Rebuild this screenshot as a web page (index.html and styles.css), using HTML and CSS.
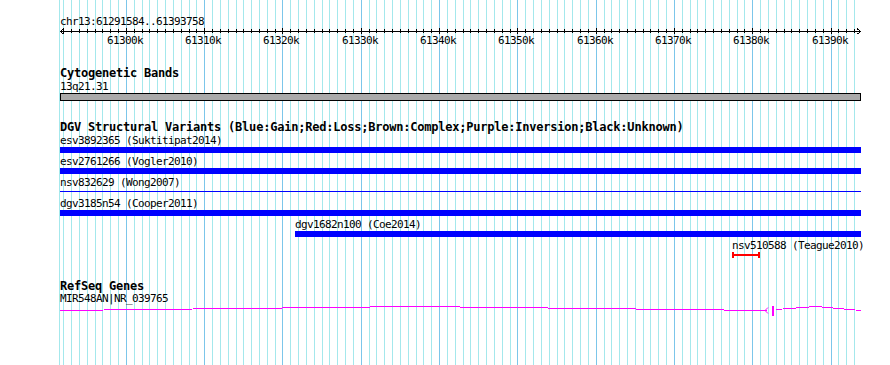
FILE: index.html
```html
<!DOCTYPE html>
<html lang="en">
  <head>
    <meta charset="UTF-8" />
    <meta name="viewport" content="width=device-width, initial-scale=1.0" />
    <title>chr13:61291584..61393758</title>
    <link rel="stylesheet" href="styles.css">
  </head>
  <body>
    <div class="panel" id="panel" data-start="61291584" data-end="61393758">
      <svg class="grid" id="grid" width="890" height="365"></svg>

      <div class="ruler">
        <div class="ruler-label">chr13:61291584..61393758</div>
        <svg class="axis" id="axis" width="890" height="6"></svg>
        <div class="ticks" id="ticks"></div>
      </div>

      <div class="track track-first">
        <div class="track-title">Cytogenetic Bands</div>
        <div class="feature" data-start="61200000" data-end="61500000">
          <div class="label">13q21.31</div>
          <div class="glyph band"></div>
        </div>
      </div>

      <div class="track">
        <div class="track-title">DGV Structural Variants (Blue:Gain;Red:Loss;Brown:Complex;Purple:Inversion;Black:Unknown)</div>
        <div class="feature" data-start="61100000" data-end="61600000">
          <div class="label">esv3892365 (Suktitipat2014)</div>
          <div class="glyph gain"></div>
        </div>
        <div class="feature" data-start="61150000" data-end="61550000">
          <div class="label">esv2761266 (Vogler2010)</div>
          <div class="glyph gain"></div>
        </div>
        <div class="feature" data-start="61200000" data-end="61450000">
          <div class="label">nsv832629 (Wong2007)</div>
          <div class="glyph gain-thin"></div>
        </div>
        <div class="feature" data-start="61250000" data-end="61420000">
          <div class="label">dgv3185n54 (Cooper2011)</div>
          <div class="glyph gain"></div>
        </div>
        <div class="feature" data-start="61321598" data-end="61420000">
          <div class="label">dgv1682n100 (Coe2014)</div>
          <div class="glyph gain"></div>
        </div>
        <div class="feature" data-start="61377411" data-end="61380987">
          <div class="label">nsv510588 (Teague2010)</div>
          <div class="glyph loss"></div>
        </div>
      </div>

      <div class="track">
        <div class="track-title title-tight">RefSeq Genes</div>
        <div class="feature" data-start="61000000" data-end="61500000">
          <div class="label">MIR548AN|NR_039765</div>
          <svg class="gene" width="801" height="12" viewBox="60 304 801 12">
            <polyline points="60,309.5 415,305.5 767,309.5" />
            <polyline points="776,308.5 816,305.5 861,309.5" />
            <polyline class="strand" points="768,306.5 765,309.5 768,312.5" />
            <rect x="772" y="305" width="2" height="10" />
          </svg>
        </div>
      </div>
    </div>

    <script src="script.js"></script>
  </body>
</html>
```

FILE: styles.css
```css
* {
  box-sizing: border-box;
}
body {
  margin: 0;
  background: #ffffff;
  color: #000000;
  font-family: "DejaVu Sans Mono", "Liberation Mono", monospace;
  font-size: 11px;
  letter-spacing: -0.62px;
  line-height: 13px;
}

.panel {
  position: relative;
  z-index: 0;
  width: 890px;
  height: 365px;
  padding-left: 60px;
  overflow: hidden;
}

/* grid lines sit behind everything else */
.grid {
  position: absolute;
  left: 0;
  top: 0;
  z-index: -1;
}
.grid line {
  stroke: #a4e8ec;
  stroke-width: 1;
  shape-rendering: crispEdges;
}
.grid line.major {
  stroke: #7cc6ea;
}

.ruler {
  padding-top: 15px;
  height: 47px;
}
.axis {
  display: block;
  margin-left: -60px;
}
.axis line,
.axis polyline {
  stroke: #000000;
  stroke-width: 1;
  fill: none;
  shape-rendering: crispEdges;
}
.ticks {
  position: relative;
  height: 13px;
}
.tick-label {
  position: absolute;
  top: 0;
  white-space: nowrap;
}

.track {
  margin-top: 20px;
}
.track-title {
  font-weight: bold;
  font-size: 12px;
  letter-spacing: -0.22px;
  white-space: nowrap;
}
.title-tight {
  line-height: 12px;
}

.feature {
  white-space: nowrap;
  padding-bottom: 2px;
}
.track-first .feature {
  padding-bottom: 0;
}

.glyph {
  height: 6px;
}
.band {
  height: 8px;
  background: #aaaaaa;
  border: 1px solid #000000;
}
.gain {
  background: #0000ff;
}
.gain-thin {
  position: relative;
}
.gain-thin::before {
  content: "";
  position: absolute;
  left: 0;
  right: 0;
  top: 2px;
  height: 1px;
  background: #0000ff;
}
.loss {
  position: relative;
  border-left: 2px solid #ff0000;
  border-right: 2px solid #ff0000;
}
.loss::before {
  content: "";
  position: absolute;
  left: 0;
  right: 0;
  top: 2px;
  height: 2px;
  background: #ff0000;
}

.gene {
  display: block;
  overflow: visible;
}
.gene polyline {
  fill: none;
  stroke: #ff00ff;
  stroke-width: 1;
  shape-rendering: crispEdges;
}
.gene polyline.strand {
  shape-rendering: auto;
}
.gene rect {
  fill: #ff00ff;
}
```

FILE: script.js
```js
const panel = document.getElementById("panel");
const viewStart = Number(panel.dataset.start);
const viewEnd = Number(panel.dataset.end);
const trackLeft = 60;
const trackWidth = 801;
const scale = 800 / (viewEnd - viewStart + 1); // pixels per base

const SVG_NS = "http://www.w3.org/2000/svg";

function toPx(pos) {
  return Math.round((pos - viewStart) * scale);
}

function addLine(svg, x1, y1, x2, y2, cls) {
  const line = document.createElementNS(SVG_NS, "line");
  line.setAttribute("x1", x1);
  line.setAttribute("y1", y1);
  line.setAttribute("x2", x2);
  line.setAttribute("y2", y2);
  if (cls) line.setAttribute("class", cls);
  svg.appendChild(line);
}

// grid + ruler ticks, one per kb
const grid = document.getElementById("grid");
const axis = document.getElementById("axis");
const ticks = document.getElementById("ticks");

addLine(grid, 59.5, 0, 59.5, 365);
addLine(axis, trackLeft, 3.5, trackLeft + 800, 3.5);

for (let pos = Math.ceil(viewStart / 1000) * 1000; pos <= viewEnd; pos += 1000) {
  const x = trackLeft + toPx(pos) + 0.5;
  const major = pos % 10000 === 0;
  addLine(grid, x, 0, x, 365, major ? "major" : "");
  if (major) {
    addLine(axis, x, 0, x, 6);
    const label = document.createElement("div");
    label.className = "tick-label";
    label.textContent = pos / 1000 + "k";
    label.style.left = toPx(pos) - 19 + "px";
    ticks.appendChild(label);
  } else {
    addLine(axis, x, 1, x, 5);
  }
}

// arrow heads on the ruler
["64,0.5 60.5,3.5 64,6.5", "857,0.5 860.5,3.5 857,6.5"].forEach((pts) => {
  const arrow = document.createElementNS(SVG_NS, "polyline");
  arrow.setAttribute("points", pts);
  axis.appendChild(arrow);
});

// place each feature from its coordinates
document.querySelectorAll(".feature").forEach((el) => {
  const left = Math.max(0, toPx(Number(el.dataset.start)));
  const right = Math.min(trackWidth, toPx(Number(el.dataset.end)));
  el.style.marginLeft = left + "px";
  el.style.width = right - left + "px";
});
```
